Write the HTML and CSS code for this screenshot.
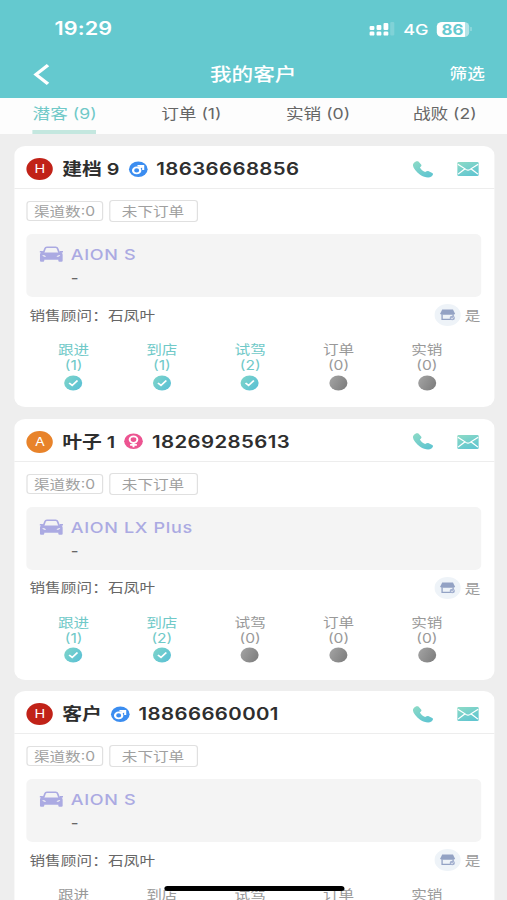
FILE: index.html
```html
<!DOCTYPE html>
<html lang="zh-CN">
<head>
<meta charset="utf-8">
<title>我的客户</title>
<link rel="stylesheet" href="styles.css">
</head>
<body>
<svg class="defs" width="0" height="0" aria-hidden="true">
  <defs>
    <linearGradient id="teal" x1="0" y1="0" x2="0.6" y2="1"><stop offset="0" stop-color="#8edbc6"/><stop offset="1" stop-color="#62c6d0"/></linearGradient>
    <linearGradient id="teal-dot" x1="0" y1="0" x2="1" y2="0.6"><stop offset="0" stop-color="#7fd5c9"/><stop offset="1" stop-color="#5dc2d4"/></linearGradient>
    <linearGradient id="gray-dot" x1="0" y1="0" x2="1" y2="0.5"><stop offset="0" stop-color="#a5a5a5"/><stop offset="1" stop-color="#818181"/></linearGradient>
    <symbol id="phone" viewBox="0 0 17 17"><path fill="url(#teal)" d="M.9 1.9C1.9.5 3.7-.1 4.7.6L6.9 3.5C7.7 4.8 6.8 5.6 5.9 6.6C6.6 8.4 8.6 10.3 10.3 11.1C11.4 10.1 12.3 9.7 13.3 10.2L16.2 11.9C17.4 12.7 16.7 14.6 15.5 15.6C13.4 17.3 9.4 16.4 6.1 13.7C2.9 11 .4 7.4.1 4.6C0 3.5.3 2.7.9 1.9Z"/></symbol>
    <symbol id="mail" viewBox="0 0 18 14"><rect width="18" height="14" rx="1.2" fill="url(#teal)"/><path d="M.5 2.2L7.6 7.6Q9 8.6 10.4 7.6L17.5 2.2M.7 12.2L6.3 7M17.3 12.2L11.7 7" fill="none" stroke="#fff" stroke-width="1.1"/></symbol>
    <symbol id="male" viewBox="0 0 17 17"><circle cx="8.5" cy="8.5" r="8" fill="#3b8df0"/><circle cx="7.1" cy="9.7" r="3.1" fill="none" stroke="#fff" stroke-width="1.9"/><path d="M8.9 7.8L12.2 5.3M7.8 4.9H12.7V9.3" fill="none" stroke="#fff" stroke-width="1.8"/></symbol>
    <symbol id="female" viewBox="0 0 17 17"><circle cx="8.5" cy="8.5" r="8" fill="#ec5491"/><circle cx="8.5" cy="6.8" r="3.3" fill="none" stroke="#fff" stroke-width="1.7"/><path d="M8.5 10.1V14.6M5.6 12.3H11.4" fill="none" stroke="#fff" stroke-width="1.7"/></symbol>
    <symbol id="car" viewBox="0 0 20 16"><path d="M3.2 7L4.7 2.2Q5 1 6.3 1H13.7Q15 1 15.3 2.2L16.8 7" fill="none" stroke="#abaae2" stroke-width="1.5"/><path fill="#abaae2" fill-rule="evenodd" d="M0 5H2.7L3.2 6.4H16.8L17.3 5H20V6.4H18.8Q19.7 7.3 19.7 8.8V15Q19.7 16 18.7 16H17Q16 16 16 15V14H4V15Q4 16 3 16H1.3Q.3 16 .3 15V8.8Q.3 7.3 1.2 6.4H0ZM2.4 9.1Q2.5 11 5.6 10.9Q5 9.2 2.4 9.1ZM17.6 9.1Q15 9.2 14.4 10.9Q17.5 11 17.6 9.1Z"/></symbol>
    <symbol id="check" viewBox="0 0 17 17"><circle cx="8.5" cy="8.5" r="8" fill="url(#teal-dot)"/><path d="M4.9 8.5L7.6 11.1L12.3 5.8" fill="none" stroke="#fff" stroke-width="1.7"/></symbol>
    <symbol id="dot" viewBox="0 0 17 17"><circle cx="8.5" cy="8.5" r="8" fill="url(#gray-dot)"/></symbol>
    <symbol id="shop" viewBox="0 0 22 22"><circle cx="11" cy="11" r="11" fill="#eef3f8"/><path d="M6.5 5.5H15.5L17 9.2Q17 10.8 15.6 10.8H6.4Q5 10.8 5 9.2Z" fill="#93a2c4"/><path d="M6.4 10.5V15.4H15.6V10.5" fill="none" stroke="#93a2c4" stroke-width="1.1"/><circle cx="14.9" cy="14" r="2.2" fill="#a3b0cf"/><path d="M13.9 14L14.7 14.8L16 13.3" fill="none" stroke="#fff" stroke-width=".6"/></symbol>
  </defs>
</svg>
<div class="screen">
  <header class="top">
    <div class="status">
      <span class="time">19:29</span>
      <svg class="signal" viewBox="0 0 21 14" width="21" height="14"><g fill="#fff"><rect x="0" y="4" width="4" height="4" rx="1"/><rect x="5.8" y="3" width="4" height="5" rx="1"/><rect x="11.6" y="1" width="4" height="7" rx="1"/><rect x="0" y="9.6" width="4" height="4" rx="1.2"/><rect x="5.8" y="9.6" width="4" height="4" rx="1.2"/><rect x="11.6" y="9.6" width="4" height="4" rx="1.2"/><rect x="17.2" y="0" width="3.4" height="13.6" rx="1" opacity=".18"/></g></svg>
      <span class="network">4G</span>
      <span class="battery">86</span><i class="nub"></i>
    </div>
    <nav class="nav">
      <svg class="back" viewBox="0 0 13 21" width="13" height="21"><path d="M12 1.2L2 10.5L12 19.8" fill="none" stroke="#fff" stroke-width="3"/></svg>
      <h1>我的客户</h1>
      <span class="filter">筛选</span>
    </nav>
  </header>
  <div class="tabs">
    <span class="tab active"><b>潜客 (9)</b></span>
    <span class="tab"><b>订单 (1)</b></span>
    <span class="tab"><b>实销 (0)</b></span>
    <span class="tab"><b>战败 (2)</b></span>
  </div>
  <main class="list">
    <section class="card">
      <div class="head"><span class="avatar red">H</span><span class="name">建档 9</span><svg class="gender"><use href="#male"/></svg><span class="number">18636668856</span><svg class="call"><use href="#phone"/></svg><svg class="mail"><use href="#mail"/></svg></div>
      <div class="tags"><span class="tag small">渠道数:0</span><span class="tag">未下订单</span></div>
      <div class="model"><svg class="car"><use href="#car"/></svg><div><div class="model-name">AION S</div><div class="dash">-</div></div></div>
      <div class="advisor"><span>销售顾问：石凤叶</span><span class="store"><svg><use href="#shop"/></svg>是</span></div>
      <div class="stages">
        <div class="stage on"><span>跟进</span><span>(1)</span><svg><use href="#check"/></svg></div>
        <div class="stage on"><span>到店</span><span>(1)</span><svg><use href="#check"/></svg></div>
        <div class="stage on"><span>试驾</span><span>(2)</span><svg><use href="#check"/></svg></div>
        <div class="stage"><span>订单</span><span>(0)</span><svg><use href="#dot"/></svg></div>
        <div class="stage"><span>实销</span><span>(0)</span><svg><use href="#dot"/></svg></div>
      </div>
    </section>
    <section class="card">
      <div class="head"><span class="avatar orange">A</span><span class="name">叶子 1</span><svg class="gender"><use href="#female"/></svg><span class="number">18269285613</span><svg class="call"><use href="#phone"/></svg><svg class="mail"><use href="#mail"/></svg></div>
      <div class="tags"><span class="tag small">渠道数:0</span><span class="tag">未下订单</span></div>
      <div class="model"><svg class="car"><use href="#car"/></svg><div><div class="model-name">AION LX Plus</div><div class="dash">-</div></div></div>
      <div class="advisor"><span>销售顾问：石凤叶</span><span class="store"><svg><use href="#shop"/></svg>是</span></div>
      <div class="stages">
        <div class="stage on"><span>跟进</span><span>(1)</span><svg><use href="#check"/></svg></div>
        <div class="stage on"><span>到店</span><span>(2)</span><svg><use href="#check"/></svg></div>
        <div class="stage"><span>试驾</span><span>(0)</span><svg><use href="#dot"/></svg></div>
        <div class="stage"><span>订单</span><span>(0)</span><svg><use href="#dot"/></svg></div>
        <div class="stage"><span>实销</span><span>(0)</span><svg><use href="#dot"/></svg></div>
      </div>
    </section>
    <section class="card">
      <div class="head"><span class="avatar red">H</span><span class="name">客户</span><svg class="gender"><use href="#male"/></svg><span class="number">18866660001</span><svg class="call"><use href="#phone"/></svg><svg class="mail"><use href="#mail"/></svg></div>
      <div class="tags"><span class="tag small">渠道数:0</span><span class="tag">未下订单</span></div>
      <div class="model"><svg class="car"><use href="#car"/></svg><div><div class="model-name">AION S</div><div class="dash">-</div></div></div>
      <div class="advisor"><span>销售顾问：石凤叶</span><span class="store"><svg><use href="#shop"/></svg>是</span></div>
      <div class="stages">
        <div class="stage"><span>跟进</span></div>
        <div class="stage"><span>到店</span></div>
        <div class="stage"><span>试驾</span></div>
        <div class="stage"><span>订单</span></div>
        <div class="stage"><span>实销</span></div>
      </div>
    </section>
  </main>
  <div class="home-bar"></div>
</div>
</body>
</html>
```
FILE: styles.css
```css
* { box-sizing: border-box; }
html, body { margin: 0; width: 507px; height: 900px; overflow: hidden; }
.defs { position: absolute; }
svg { display: block; flex: none; overflow: visible; }

/* The whole screen is drawn 1.2 times wider than its natural width. */
.screen {
  position: relative;
  width: 422.5px;
  height: 900px;
  overflow: hidden;
  transform: scaleX(1.2);
  transform-origin: 0 0;
  background: #eeeeee;
  font-family: Inter, "Noto Sans CJK SC", sans-serif;
  font-size: 13px;
  color: #666;
}

.top { height: 98px; background: #64c9cf; color: #fff; }
.status { display: flex; align-items: center; height: 51px; padding: 7px 29.5px 0 45.5px; }
.time { font-size: 18px; font-weight: 600; line-height: 20px; letter-spacing: .1px; margin-right: auto; }
.signal { margin-right: 6.5px; }
.network { font-size: 15px; font-weight: 500; margin-right: 6.5px; }
.battery {
  width: 27px; height: 15px; border-radius: 4.5px;
  background: linear-gradient(90deg, #fff 86%, #b4e3e6 86%);
  color: #64c9cf; font-size: 14px; line-height: 15px; font-weight: 700; text-align: center;
}
.nub { width: 1.5px; height: 4px; margin-left: 1px; background: #a4dfe2; border-radius: 1px; }
.nav { display: grid; grid-template-columns: 1fr auto 1fr; align-items: center; height: 47px; padding: 0 18.5px 0 28px; }
h1 { margin: 0; font-size: 18px; font-weight: 500; line-height: 24px; transform: translateX(-5px); }
.filter { justify-self: end; font-size: 14.7px; font-weight: 500; line-height: 20px; margin-bottom: 1px; }

.tabs { display: grid; grid-template-columns: repeat(4, 1fr); height: 36px; padding-left: 1px; margin-right: -1px; background: #fdfdfd; }
.tab { display: flex; justify-content: center; }
.tab b { font-weight: 400; font-size: 14.7px; height: 36px; line-height: 32px; white-space: nowrap; }
.tab.active { color: #70c9c8; }
.tab.active b { border-bottom: 4px solid #c4e7df; }

.list { display: flex; flex-direction: column; gap: 11.5px; padding: 12px 11px 0 11.5px; }
.card { flex: none; height: 261px; background: #fff; border-radius: 9px; }
.head { display: flex; align-items: center; height: 43px; padding: 4px 12.5px 0 10.8px; border-bottom: 1px solid #ededed; }
.avatar { width: 22px; height: 22px; border-radius: 50%; color: #fff; font-size: 12px; line-height: 22px; text-align: center; }
.red { background: #c12218; }
.orange { background: #e8832a; }
.name { margin: -2px 0 0 7.5px; color: #2e2e2e; font-size: 16.5px; font-weight: 600; white-space: nowrap; }
.gender { width: 16.5px; height: 16.5px; margin: 0 7px 0 7.2px; }
.number { color: #2e2e2e; font-size: 17px; font-weight: 600; letter-spacing: .33px; margin-right: auto; }
.call { width: 17px; height: 17px; margin-right: 20px; }
.mail { width: 18px; height: 14px; }

.tags { display: flex; align-items: center; gap: 5px; height: 22px; margin: 11px 0 0 10.5px; }
.tag { width: 74px; height: 22px; border: 1px solid #e0e0e0; border-radius: 3px; color: #a0a0a0; line-height: 20px; text-align: center; white-space: nowrap; }
.tag.small { width: 63.5px; height: 20px; line-height: 18px; }

.model { display: flex; height: 63px; margin: 12px 10.5px 0; padding: 10px 0 0 11px; background: #f4f4f4; border-radius: 5px; }
.car { width: 19.5px; height: 16px; margin: 2px 6.5px 0 0; }
.model-name { color: #abaae2; font-size: 15px; font-weight: 500; line-height: 21px; letter-spacing: .55px; }
.dash { margin-top: 5px; line-height: 15px; font-size: 14px; font-weight: 500; }

.advisor { display: flex; justify-content: space-between; align-items: center; height: 22px; margin: 7px 11px 0 13px; line-height: 18px; letter-spacing: .1px; }
.advisor > span:first-child { margin-top: -1px; }
.store { display: flex; align-items: center; gap: 3px; color: #999; }
.store svg { width: 22px; height: 22px; }

.stages { display: grid; grid-template-columns: repeat(5, 73.6px); margin: 15px 0 0 13px; }
.stage { display: flex; flex-direction: column; align-items: center; line-height: 16px; color: #999; }
.stage span + span { line-height: 16px; }
.stage svg { width: 16px; height: 16px; margin-top: 1.5px; }
.stage.on { color: #70c9c8; }

.home-bar { position: absolute; left: 136.7px; top: 886px; width: 150px; height: 5px; border-radius: 3px; background: #000; }
```
